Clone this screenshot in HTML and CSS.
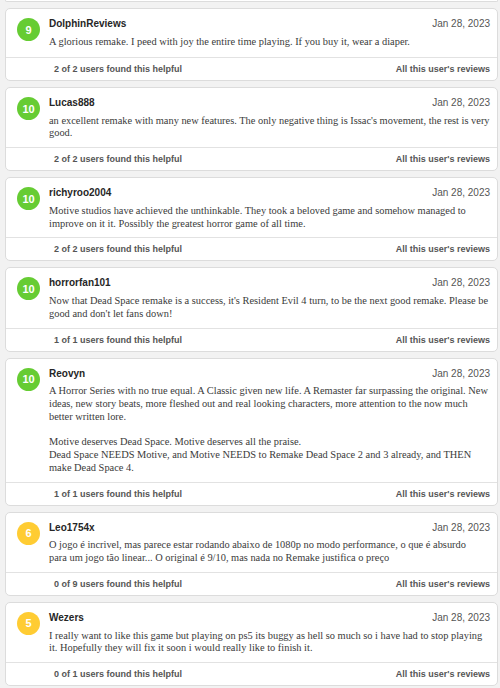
FILE: index.html
```html
<!DOCTYPE html>
<html>
<head>
<meta charset="utf-8">
<link rel="stylesheet" href="styles.css">
</head>
<body>
<div class="list">
  <div class="card-stub"></div>

  <div class="card">
    <div class="main">
      <div class="score green">9</div>
      <div class="content">
        <div class="head"><span class="user">DolphinReviews</span><span class="date">Jan 28, 2023</span></div>
        <p class="text">A glorious remake. I peed with joy the entire time playing. If you buy it, wear a diaper.</p>
      </div>
    </div>
    <div class="foot"><span>2 of 2 users found this helpful</span><span>All this user's reviews</span></div>
  </div>

  <div class="card">
    <div class="main">
      <div class="score green">10</div>
      <div class="content">
        <div class="head"><span class="user">Lucas888</span><span class="date">Jan 28, 2023</span></div>
        <p class="text">an excellent remake with many new features. The only negative thing is Issac's movement, the rest is very good.</p>
      </div>
    </div>
    <div class="foot"><span>2 of 2 users found this helpful</span><span>All this user's reviews</span></div>
  </div>

  <div class="card">
    <div class="main">
      <div class="score green">10</div>
      <div class="content">
        <div class="head"><span class="user">richyroo2004</span><span class="date">Jan 28, 2023</span></div>
        <p class="text">Motive studios have achieved the unthinkable. They took a beloved game and somehow managed to improve on it it. Possibly the greatest horror game of all time.</p>
      </div>
    </div>
    <div class="foot"><span>2 of 2 users found this helpful</span><span>All this user's reviews</span></div>
  </div>

  <div class="card">
    <div class="main">
      <div class="score green">10</div>
      <div class="content">
        <div class="head"><span class="user">horrorfan101</span><span class="date">Jan 28, 2023</span></div>
        <p class="text">Now that Dead Space remake is a success, it's Resident Evil 4 turn, to be the next good remake. Please be good and don't let fans down!</p>
      </div>
    </div>
    <div class="foot"><span>1 of 1 users found this helpful</span><span>All this user's reviews</span></div>
  </div>

  <div class="card">
    <div class="main">
      <div class="score green">10</div>
      <div class="content">
        <div class="head"><span class="user">Reovyn</span><span class="date">Jan 28, 2023</span></div>
        <p class="text">A Horror Series with no true equal. A Classic given new life. A Remaster far surpassing the original. New ideas, new story beats, more fleshed out and real looking characters, more attention to the now much better written lore.<br><br>Motive deserves Dead Space. Motive deserves all the praise.<br>Dead Space NEEDS Motive, and Motive NEEDS to Remake Dead Space 2 and 3 already, and THEN make Dead Space 4.</p>
      </div>
    </div>
    <div class="foot"><span>1 of 1 users found this helpful</span><span>All this user's reviews</span></div>
  </div>

  <div class="card">
    <div class="main">
      <div class="score yellow">6</div>
      <div class="content">
        <div class="head"><span class="user">Leo1754x</span><span class="date">Jan 28, 2023</span></div>
        <p class="text">O jogo é incrivel, mas parece estar rodando abaixo de 1080p no modo performance, o que é absurdo<br>para um jogo tão linear... O original é 9/10, mas nada no Remake justifica o preço</p>
      </div>
    </div>
    <div class="foot"><span>0 of 9 users found this helpful</span><span>All this user's reviews</span></div>
  </div>

  <div class="card">
    <div class="main">
      <div class="score yellow">5</div>
      <div class="content">
        <div class="head"><span class="user">Wezers</span><span class="date">Jan 28, 2023</span></div>
        <p class="text">I really want to like this game but playing on ps5 its buggy as hell so much so i have had to stop playing it. Hopefully they will fix it soon i would really like to finish it.</p>
      </div>
    </div>
    <div class="foot"><span>0 of 1 users found this helpful</span><span>All this user's reviews</span></div>
  </div>
</div>
</body>
</html>
```

FILE: styles.css
```css
html, body {
  margin: 0;
  padding: 0;
  background: #f2f2f2;
}
body {
  font-family: "Liberation Sans", Arial, sans-serif;
  overflow: hidden;
}
.list {
  display: flex;
  flex-direction: column;
  gap: 6px;
  padding: 0 2px 0 5px;
}
.card-stub {
  height: 1px;
  background: #fff;
  border: 1px solid #dcdcdc;
  border-top: none;
  border-radius: 0 0 5px 5px;
}
.card {
  background: #fff;
  border: 1px solid #dcdcdc;
  border-radius: 5px;
}
.main {
  display: flex;
  gap: 9px;
  padding: 8px 7px 7px 11px;
  border-bottom: 1px solid #e2e2e2;
}
.score {
  flex: none;
  width: 23px;
  height: 23px;
  margin-top: 1px;
  border-radius: 50%;
  color: #fff;
  font-weight: bold;
  font-size: 11px;
  display: flex;
  align-items: center;
  justify-content: center;
}
.green { background: #66cc33; }
.yellow { background: #ffcc33; }
.content {
  flex: 1;
  min-width: 0;
  min-height: 33px;
}
.head {
  display: flex;
  justify-content: space-between;
  align-items: baseline;
  margin-top: 1px;
  line-height: 12px;
}
.user {
  font-weight: bold;
  font-size: 10px;
  color: #262626;
}
.date {
  font-size: 10px;
  color: #555;
}
.text {
  margin: 5.6px 0 0;
  font-family: "Liberation Serif", "Times New Roman", serif;
  font-size: 10.4px;
  line-height: 12.8px;
  color: #3a3a3a;
}
.foot {
  height: 22px;
  display: flex;
  align-items: center;
  justify-content: space-between;
  padding: 0 7px 0 48px;
  font-size: 9px;
  font-weight: bold;
  color: #555;
}
```
